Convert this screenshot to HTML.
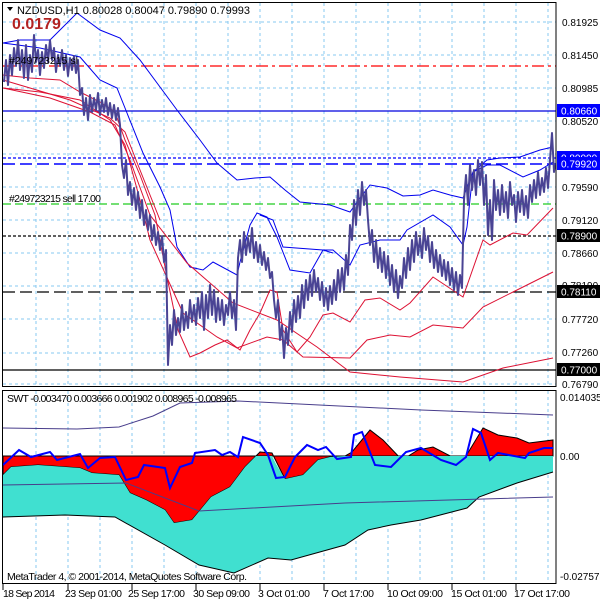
<!DOCTYPE html>
<html><head><meta charset="utf-8"><style>
html,body{margin:0;padding:0;background:#fff;}
svg{display:block;font-family:"Liberation Sans",sans-serif;}
</style></head><body>
<svg width="600" height="600" viewBox="0 0 600 600" xmlns="http://www.w3.org/2000/svg">
<rect width="600" height="600" fill="#fff"/>
<g stroke="#87c8f0" stroke-width="1" stroke-dasharray="3,3" fill="none">
<path d="M36 3V386M68 3V386M100 3V386M132 3V386M164 3V386M196 3V386M228 3V386M260 3V386M292 3V386M324 3V386M356 3V386M388 3V386M420 3V386M452 3V386M484 3V386M516 3V386M548 3V386"/>
<path d="M36 391V583M68 391V583M100 391V583M132 391V583M164 391V583M196 391V583M228 391V583M260 391V583M292 391V583M324 391V583M356 391V583M388 391V583M420 391V583M452 391V583M484 391V583M516 391V583M548 391V583"/>
<path d="M3 22H556M3 55H556M3 88H556M3 121H556M3 154H556M3 187H556M3 220H556M3 253H556M3 286H556M3 319H556M3 353H556M3 384H556"/>
</g>
<path d="M3 66H556" stroke="#f00" stroke-width="1.3" stroke-dasharray="12,4,3,4"/>
<path d="M3 111H556" stroke="#0000dd" stroke-width="1.3"/>
<path d="M3 158H556" stroke="#0000ff" stroke-width="1.3" stroke-dasharray="3,2"/>
<path d="M3 164H556" stroke="#0000ff" stroke-width="1.5" stroke-dasharray="12,5"/>
<path d="M3 204H556" stroke="#22cc22" stroke-width="1.2" stroke-dasharray="8,4"/>
<path d="M3 236H556" stroke="#000" stroke-width="1.2" stroke-dasharray="3,2"/>
<path d="M3 292H556" stroke="#000" stroke-width="1.3" stroke-dasharray="12,5"/>
<path d="M3 370H556" stroke="#000" stroke-width="1.3"/>
<g fill="none" stroke="#0000ee" stroke-width="1">
<polyline points="3,43 20,40 50,40 77,13 100,30 120,38 140,60 160,87 177,110 200,140 217,163 237,180 255,178 270,177 285,190 300,202 330,205 350,212 360,198 370,185 387,188 403,196 420,195 433,190 450,195 463,198 473,172 487,165 500,165 523,177 540,170 553,162"/>
<polyline points="3,43 40,48 80,57 100,80 117,88 127,113 143,153 160,187 170,210 177,247 190,267 203,270 213,262 237,275 240,262 250,225 257,213 267,217 277,237 290,270 310,273 323,250 333,250 350,265 360,245 380,240 400,240 407,230 433,215 450,227 463,245 467,227 473,172 487,160 500,158 520,157 540,150 553,147"/>
<polyline points="260,215 273,220 283,247 323,250 333,253"/>
</g>
<g fill="none" stroke="#dd1133" stroke-width="1">
<polyline points="3,75 30,78 60,80 80,92 100,102 115,112 125,140 140,175 155,215 167,277 178,330 190,357 200,353 215,345 227,340 240,350 250,330 260,313 270,290 277,292 283,330 297,352 310,337 323,315 333,313 350,322 365,300 380,298 400,310 410,303 433,277 463,297 483,240 490,245 513,233 527,235 553,208"/>
<polyline points="3,88 40,92 80,100 110,120 125,145 140,200 150,240 183,313 217,337 237,348 267,337 283,340 303,357 350,358 367,340 390,335 410,337 433,325 463,328 483,307 513,292 553,272"/>
<polyline points="3,88 50,98 90,112 115,125 130,160 150,215 187,263 233,303 277,320 317,347 350,372 400,377 463,382 503,368 553,358"/>
<polyline points="3,80 30,88 70,100 110,118 125,132 140,170 160,220"/>
</g>
<polyline fill="none" stroke="#4a4494" stroke-width="2" stroke-linejoin="round" points="4,82 6,60 8,85 10,55 12,75 14,48 16,66 18,40 20,70 22,50 24,78 26,45 28,80 30,55 32,72 34,35 36,62 38,50 40,75 42,52 44,68 46,45 48,62 50,40 52,60 54,48 56,72 58,55 60,66 62,50 64,70 66,55 68,76 70,58 72,70 74,56 76,73 78,60 80,95 82,88 84,115 86,98 88,120 90,95 92,112 94,98 96,110 98,93 100,115 102,100 104,112 106,98 108,115 110,103 112,118 114,105 116,120 118,108 120,125 122,165 124,178 126,160 128,195 130,182 132,205 134,188 136,210 138,192 140,218 142,200 144,225 146,210 148,230 150,215 152,240 154,225 156,245 158,232 160,250 162,236 164,262 166,250 168,365 170,325 172,345 174,310 176,335 178,318 180,332 182,305 184,330 186,312 188,328 190,300 192,322 194,305 196,325 198,298 200,318 202,292 204,330 206,295 208,318 210,285 212,315 214,290 216,322 218,298 220,320 222,300 224,325 226,305 228,315 230,292 232,318 234,300 236,330 238,258 240,240 242,262 244,232 246,255 248,238 250,252 252,228 254,258 256,242 258,262 260,245 262,265 264,252 266,270 268,258 270,278 272,272 274,300 276,318 278,300 280,340 282,325 284,358 286,328 288,345 290,312 292,332 294,300 296,322 298,296 300,318 302,285 304,308 306,280 308,300 310,275 312,296 314,270 316,292 318,278 320,300 322,282 324,306 326,288 328,310 330,286 332,304 334,280 336,300 338,270 340,292 342,268 344,290 346,255 348,275 350,225 352,240 354,200 356,225 358,190 360,215 362,182 364,205 366,190 368,220 370,245 372,230 374,262 376,240 378,268 380,248 382,272 384,252 386,278 388,256 390,285 392,265 394,292 396,270 398,298 400,276 402,288 404,258 406,278 408,248 410,270 412,240 414,262 416,232 418,255 420,238 422,258 424,228 426,250 428,236 430,262 432,242 434,268 436,250 438,272 440,255 442,276 444,260 446,280 448,262 450,285 452,268 454,290 456,272 458,295 460,275 462,288 464,200 466,175 468,205 470,165 472,190 474,170 476,195 478,160 480,185 482,162 484,205 486,175 488,235 490,200 492,240 494,180 496,210 498,190 500,215 502,185 504,212 506,192 508,218 510,182 512,205 514,195 516,222 518,192 520,212 522,190 524,215 526,196 528,218 530,185 532,202 534,180 536,198 538,172 540,195 542,178 544,192 546,168 548,188 550,160 552,133 554,172 555,165"/>
<rect x="2.5" y="2.5" width="553.5" height="384" fill="none" stroke="#000" stroke-width="1"/>
<path d="M7 7L13 7L10 11Z" fill="#000"/>
<text x="17" y="14" font-size="11" fill="#000" textLength="233">NZDUSD,H1  0.80028 0.80047 0.79890 0.79993</text>
<text x="12" y="29" font-size="16" font-weight="bold" fill="#b22222">0.0179</text>
<text x="9" y="64" font-size="10.5" fill="#000">#249723215 sl</text>
<text x="9" y="202" font-size="10.5" fill="#000" textLength="92">#249723215 sell 17.00</text>
<g font-size="10" fill="#000">
<text x="562" y="26">0.81925</text><text x="562" y="59">0.81450</text><text x="562" y="92">0.80985</text>
<text x="562" y="125">0.80520</text><text x="562" y="191">0.79590</text>
<text x="562" y="224">0.79120</text><text x="562" y="257">0.78660</text><text x="562" y="289">0.78190</text>
<text x="562" y="323">0.77720</text><text x="562" y="356">0.77260</text><text x="562" y="388">0.76790</text>
</g>
<g font-size="10">
<rect x="557" y="104" width="43" height="13" fill="#0000ff"/><text x="561" y="114.5" fill="#fff">0.80660</text>
<rect x="557" y="151" width="43" height="13" fill="#0000ff"/><text x="561" y="161.5" fill="#fff">0.80000</text>
<rect x="557" y="157" width="43" height="13" fill="#0000ff"/><text x="561" y="167.5" fill="#fff">0.79920</text>
<rect x="557" y="229" width="43" height="13" fill="#000"/><text x="561" y="239.5" fill="#fff">0.78900</text>
<rect x="557" y="285" width="43" height="13" fill="#000"/><text x="561" y="295.5" fill="#fff">0.78110</text>
<rect x="557" y="363" width="43" height="13" fill="#000"/><text x="561" y="373.5" fill="#fff">0.77000</text>
</g>
<polygon fill="#ff0000" stroke="#000" stroke-width="1" points="3,456 3,475 11,467 38,465 80,468 92,473 119,475 130,493 146,500 165,510 174,523 192,520 211,497 230,487 245,467 260,452 272,453 285,479 303,475 318,460 330,457 345,456 352,452 370,430 383,440 402,460 418,450 433,447 456,459 466,456 483,428 498,435 517,438 529,443 553,440 553,456"/>
<polygon fill="#40e0d0" stroke="none" points="3,475 11,467 38,465 80,468 92,473 119,475 130,493 146,500 165,510 174,523 192,520 211,497 230,487 245,467 256,456 262,456 272,456 276,464 285,479 303,475 318,460 330,457 345,456 553,456 553,472 517,483 479,497 467,508 421,520 391,525 368,530 345,545 291,560 268,558 234,573 199,565 165,545 115,517 65,515 3,517"/>
<polyline fill="none" stroke="#000" stroke-width="1" points="3,517 65,515 115,517 165,545 199,565 234,573 268,558 291,560 345,545 368,530 391,525 421,520 467,508 479,497 517,483 553,472"/>
<polyline fill="none" stroke="#483d8b" stroke-width="1" points="3,428 77,429 119,427 153,416 180,403 238,401 421,410 553,415"/>
<polyline fill="none" stroke="#483d8b" stroke-width="1" points="3,485 126,483 199,511 345,503 553,497"/>
<polyline fill="none" stroke="#0000ff" stroke-width="2" points="3,465 19,450 31,457 50,452 57,460 80,454 88,468 100,458 115,457 126,480 138,477 144,465 165,468 170,488 180,467 192,463 195,453 215,450 222,455 230,452 238,457 243,437 260,443 268,455 276,478 285,477 295,457 307,445 318,450 326,447 337,459 351,457 354,435 362,432 375,465 391,467 406,452 421,448 441,460 456,465 466,457 473,429 481,433 490,460 498,453 525,458 529,453 544,448 553,448"/>
<rect x="2.5" y="390.5" width="553.5" height="193" fill="none" stroke="#000" stroke-width="1"/>
<text x="7" y="402" font-size="10.5" fill="#000" textLength="230">SWT -0.003470 0.003666 0.001902 0.008965 -0.008965</text>
<text x="7" y="580" font-size="10.5" fill="#000" textLength="240">MetaTrader 4, © 2001-2014, MetaQuotes Software Corp.</text>
<g font-size="10" fill="#000">
<text x="560" y="401">0.014035</text><text x="560" y="460">0.00</text><text x="560" y="580">-0.027578</text>
</g>
<path d="M3 584V590M68 584V590M132 584V590M196 584V590M260 584V590M324 584V590M388 584V590M452 584V590M516 584V590" stroke="#000"/>
<g font-size="10.5" fill="#000">
<text x="3" y="597" textLength="52">18 Sep 2014</text><text x="65" y="597" textLength="57">23 Sep 01:00</text><text x="128" y="597" textLength="57">25 Sep 17:00</text>
<text x="193" y="597" textLength="57">30 Sep 09:00</text><text x="258" y="597" textLength="52">3 Oct 01:00</text><text x="323" y="597" textLength="51">7 Oct 17:00</text>
<text x="387" y="597" textLength="56">10 Oct 09:00</text><text x="451" y="597" textLength="56">15 Oct 01:00</text><text x="514" y="597" textLength="56">17 Oct 17:00</text>
</g>
</svg>
</body></html>
